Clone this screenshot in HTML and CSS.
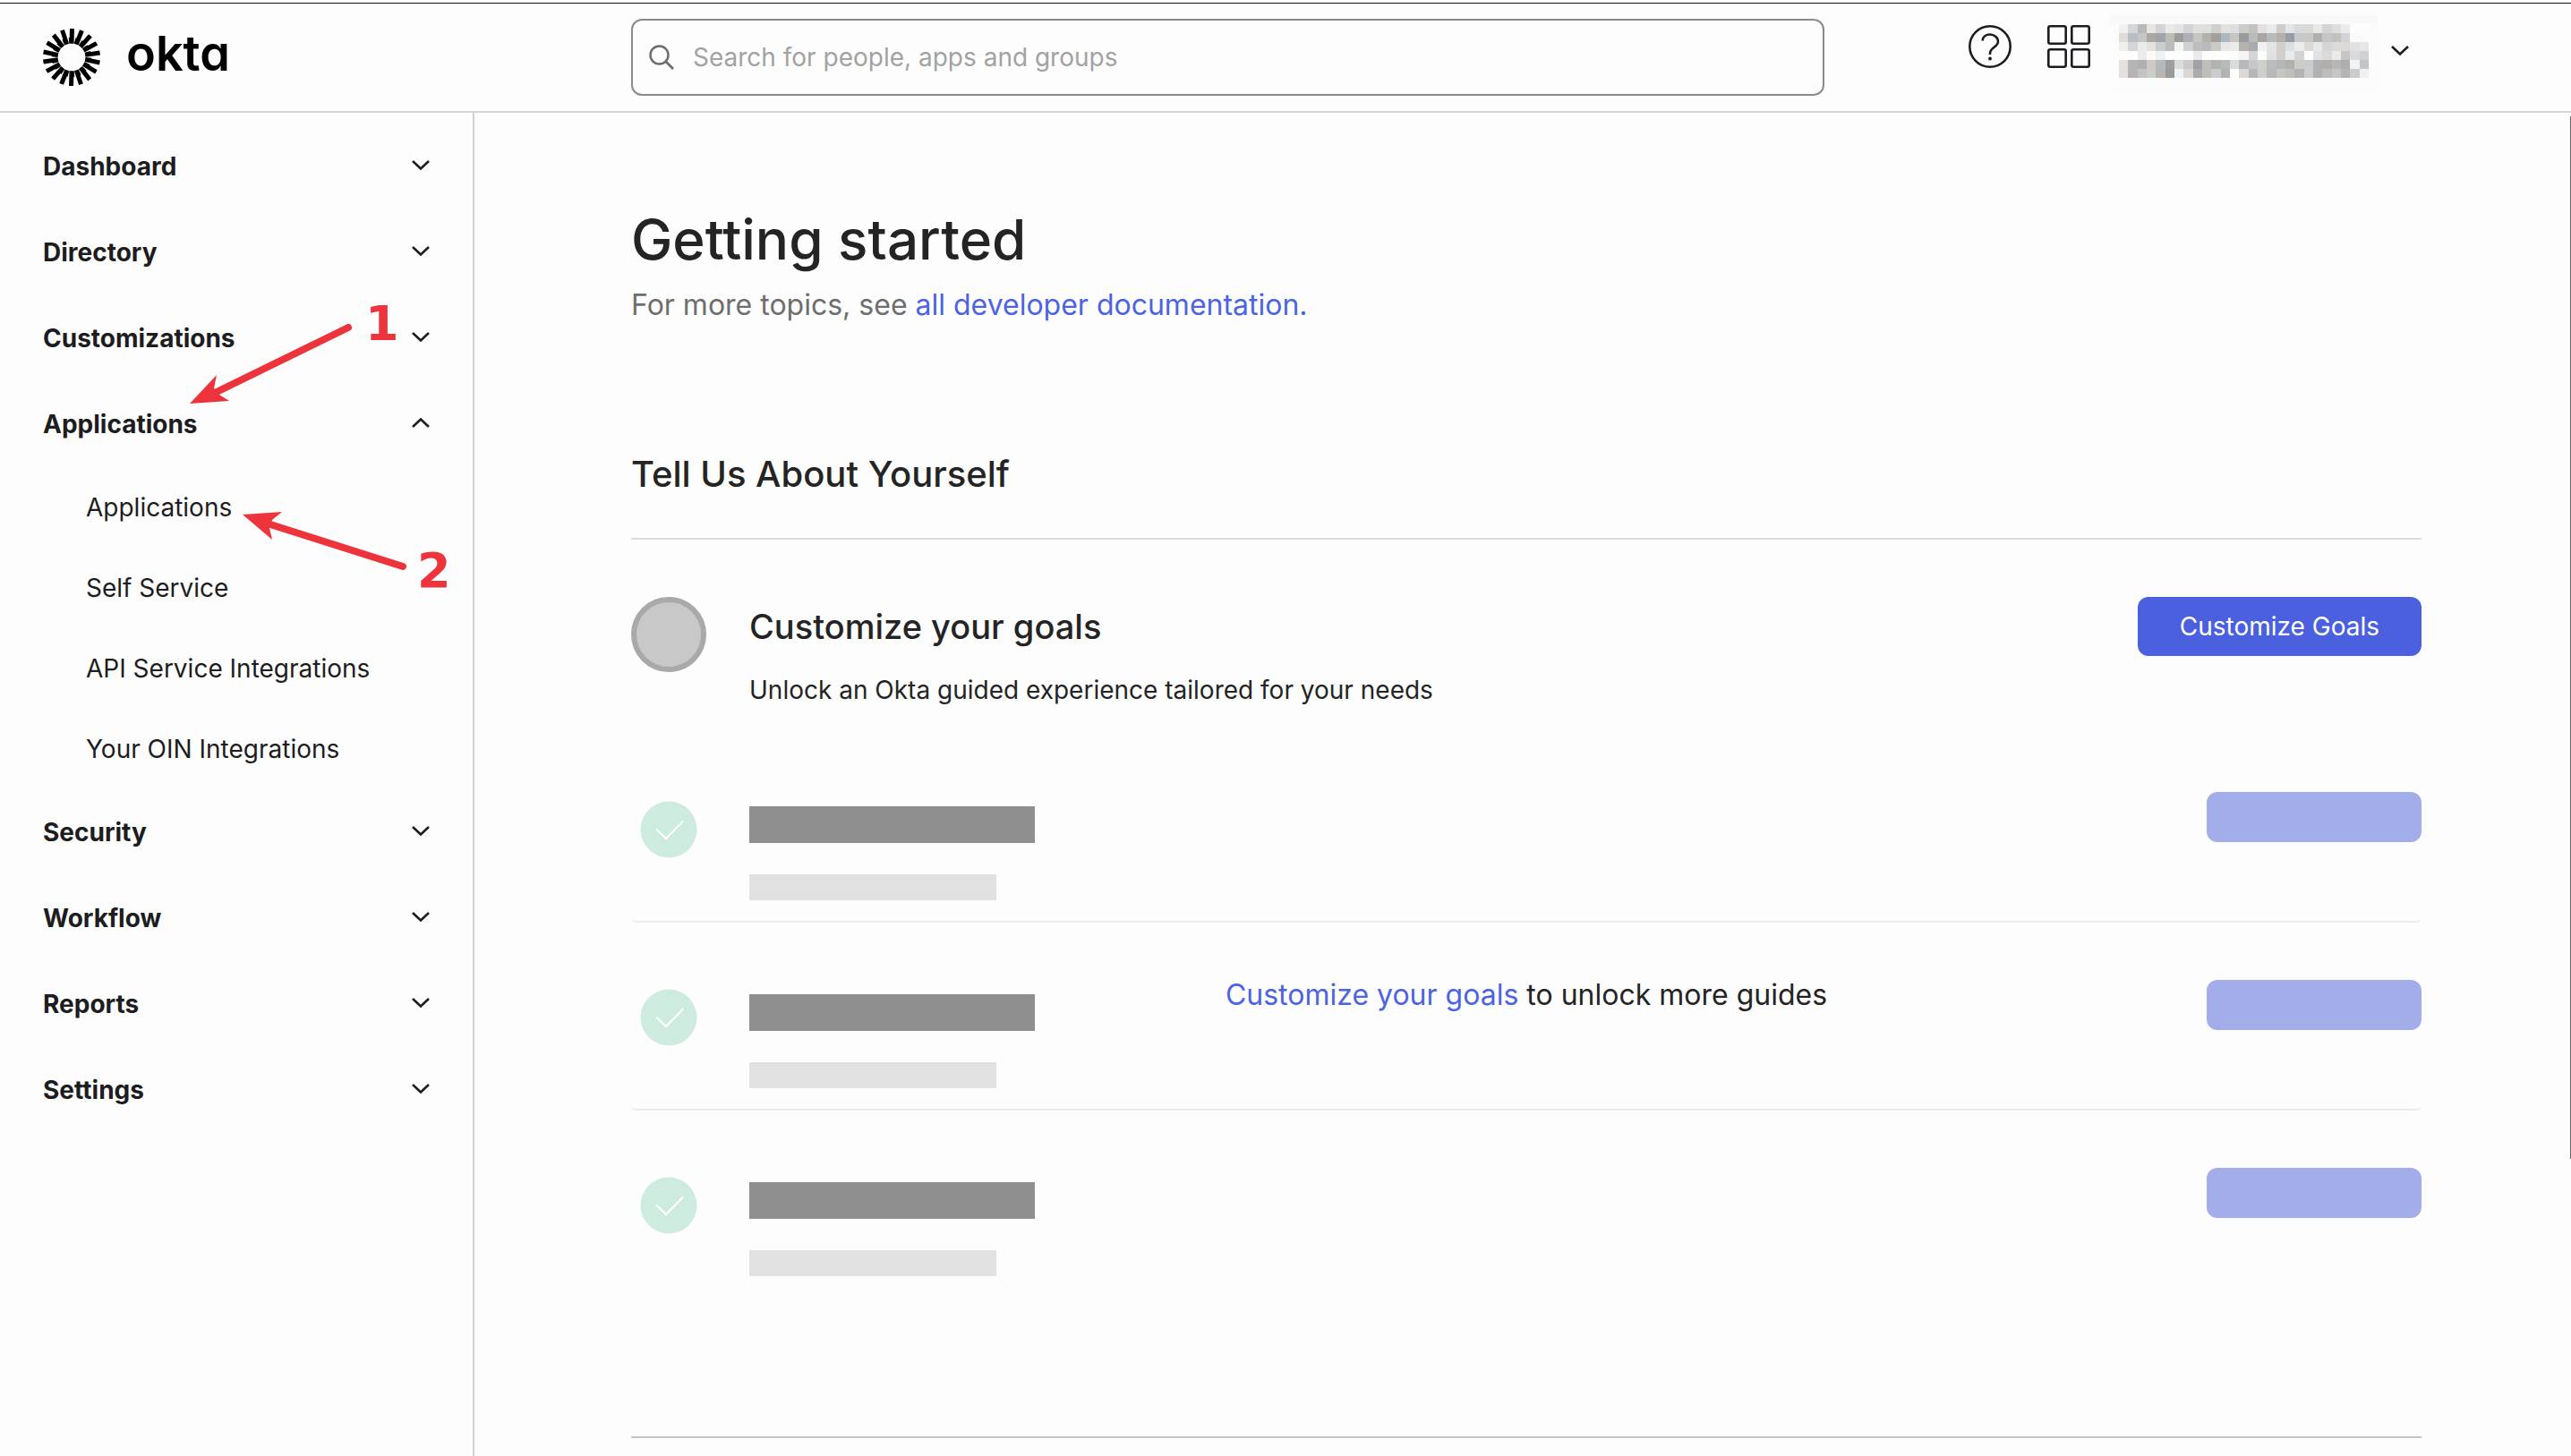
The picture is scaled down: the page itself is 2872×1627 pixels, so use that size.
FILE: index.html
```html
<!DOCTYPE html>
<html lang="en">
<head>
<meta charset="utf-8">
<meta name="viewport" content="width=device-width, initial-scale=1">
<title>Getting started | Okta</title>
<link rel="stylesheet" href="styles.css">
</head>
<body>
<svg class="sprite" aria-hidden="true">
  <symbol id="chevron" viewBox="0 0 24 24"><path d="M3 6l9 8.500 9-8.500" fill="none" stroke="currentColor" stroke-width="2.600"/></symbol>
  <symbol id="chevron-up" viewBox="0 0 24 24"><path d="M3 15l9-8.500 9 8.500" fill="none" stroke="currentColor" stroke-width="2.600"/></symbol>
  <symbol id="check" viewBox="0 0 64 64"><circle cx="32" cy="32" r="31.500" fill="#ceebdf"/><path d="M18 31.500L29 42 48 22.500" fill="none" stroke="#fff" stroke-width="2"/></symbol>
  <path id="ray" d="M-2-32H3L2.500-15.300H-2.700L-3.200-22H-2.300Z"/>
</svg>

<header class="topbar">
  <a class="brand" href="#">
    <svg class="brand-mark" viewBox="-32 -32 64 64" aria-hidden="true">
      <use href="#ray"/><use href="#ray" transform="rotate(20)"/><use href="#ray" transform="rotate(40)"/>
      <use href="#ray" transform="rotate(60)"/><use href="#ray" transform="rotate(80)"/><use href="#ray" transform="rotate(100)"/>
      <use href="#ray" transform="rotate(120)"/><use href="#ray" transform="rotate(140)"/><use href="#ray" transform="rotate(160)"/>
      <use href="#ray" transform="rotate(180)"/><use href="#ray" transform="rotate(200)"/><use href="#ray" transform="rotate(220)"/>
      <use href="#ray" transform="rotate(240)"/><use href="#ray" transform="rotate(260)"/><use href="#ray" transform="rotate(280)"/>
      <use href="#ray" transform="rotate(300)"/><use href="#ray" transform="rotate(320)"/><use href="#ray" transform="rotate(340)"/>
    </svg>
    <span class="brand-name">okta</span>
  </a>
  <label class="search">
    <svg class="search-icon" viewBox="0 0 30 30" aria-hidden="true"><circle cx="12.500" cy="12.500" r="10" fill="none" stroke="#6e6e6e" stroke-width="2.500"/><path d="M19.500 19.500L28 28" stroke="#6e6e6e" stroke-width="2.800"/></svg>
    <input class="search-input" type="text" aria-label="Search" placeholder="Search for people, apps and groups">
  </label>
  <div class="tools">
    <button class="icon-button" type="button" aria-label="Help">
      <svg viewBox="0 0 48 48" fill="none" stroke="currentColor" stroke-width="2.600"><circle cx="24" cy="24" r="22.700"/><path d="M15.500 17.500C16 13 19.500 10.500 24 10.500s9 3.200 9 8c0 6-9 6.500-9 13v1.500"/><circle cx="24" cy="37.500" r="1.900" fill="currentColor" stroke="none"/></svg>
    </button>
    <button class="icon-button" type="button" aria-label="Apps">
      <svg viewBox="0 0 48 48" fill="none" stroke="currentColor" stroke-width="2.600"><rect x="1.300" y="1.300" width="19.400" height="19.400" rx="2"/><rect x="27.300" y="1.300" width="19.400" height="19.400" rx="2"/><rect x="1.300" y="27.300" width="19.400" height="19.400" rx="2"/><rect x="27.300" y="27.300" width="19.400" height="19.400" rx="2"/></svg>
    </button>
    <button class="account" type="button" aria-label="Account">
      <span class="account-box"><svg class="account-mosaic" id="mosaic" viewBox="0 0 27 6" preserveAspectRatio="none" shape-rendering="crispEdges"></svg></span>
      <svg class="chevron account-chevron"><use href="#chevron"/></svg>
    </button>
  </div>
</header>

<div class="layout">
  <nav class="sidebar">
    <button class="nav-item" type="button">Dashboard<svg class="chevron"><use href="#chevron"/></svg></button>
    <button class="nav-item" type="button">Directory<svg class="chevron"><use href="#chevron"/></svg></button>
    <button class="nav-item" type="button">Customizations<svg class="chevron"><use href="#chevron"/></svg></button>
    <button class="nav-item" type="button" aria-expanded="true">Applications<svg class="chevron"><use href="#chevron-up"/></svg></button>
    <a class="nav-link" href="#">Applications</a>
    <a class="nav-link" href="#">Self Service</a>
    <a class="nav-link" href="#">API Service Integrations</a>
    <a class="nav-link" href="#">Your OIN Integrations</a>
    <button class="nav-item" type="button">Security<svg class="chevron"><use href="#chevron"/></svg></button>
    <button class="nav-item" type="button">Workflow<svg class="chevron"><use href="#chevron"/></svg></button>
    <button class="nav-item" type="button">Reports<svg class="chevron"><use href="#chevron"/></svg></button>
    <button class="nav-item" type="button">Settings<svg class="chevron"><use href="#chevron"/></svg></button>
  </nav>

  <main class="content">
    <h1 class="page-title">Getting started</h1>
    <p class="lead">For more topics, see <a href="#">all developer documentation.</a></p>

    <section>
      <h2 class="section-title">Tell Us About Yourself</h2>
      <div class="goal">
        <span class="goal-dot"></span>
        <div class="goal-text">
          <h3 class="goal-title">Customize your goals</h3>
          <p class="goal-note">Unlock an Okta guided experience tailored for your needs</p>
        </div>
        <button class="primary" type="button">Customize Goals</button>
      </div>
      <div class="guides">
        <div class="guide">
          <svg class="guide-check"><use href="#check"/></svg>
          <div class="guide-bars"><div class="bar-title"></div><div class="bar-note"></div></div>
          <div class="bar-button"></div>
        </div>
        <div class="guide">
          <svg class="guide-check"><use href="#check"/></svg>
          <div class="guide-bars"><div class="bar-title"></div><div class="bar-note"></div></div>
          <div class="bar-button"></div>
        </div>
        <div class="guide">
          <svg class="guide-check"><use href="#check"/></svg>
          <div class="guide-bars"><div class="bar-title"></div><div class="bar-note"></div></div>
          <div class="bar-button"></div>
        </div>
        <p class="unlock"><a href="#">Customize your goals</a> to unlock more guides</p>
      </div>
    </section>
  </main>
</div>

<div class="scroll-thumb"></div>
<svg class="arrows" viewBox="0 0 540 700" aria-hidden="true">
  <path d="M389 366L242 438M450 633L302 586" stroke-width="8" stroke-linecap="round"/>
  <path class="head" d="M212 451L242 419 239 434 245 441 256 448ZM271 575L315 572 304 581 301 590 304 603Z"/>
</svg>
<span class="step step-one">1</span>
<span class="step step-two">2</span>
<script src="mosaic.js"></script>
</body>
</html>
```
FILE: styles.css
```css
* { box-sizing: border-box; }

body {
  margin: 0;
  min-height: 100vh;
  display: flex;
  flex-direction: column;
  position: relative;
  background: #fdfdfd;
  color: #1d1d21;
  font: 400 28px/40px Inter, "Liberation Sans", sans-serif;
}

h1, h2, h3, p { margin: 0; }
a { color: #4c64e1; text-decoration: none; }
button { border: 0; padding: 0; background: none; color: inherit; font: inherit; }
.sprite { position: absolute; width: 0; height: 0; }

/* Top bar */
.topbar {
  display: flex;
  align-items: center;
  height: 126px;
  padding: 4px 167px 0 48px;
  border-bottom: 2px solid #d4d4dc;
  background: linear-gradient(#fff 3px, #111 3px, #111 4px, #fdfdfd 4px);
}
.brand { display: flex; align-items: center; width: 657px; gap: 29px; color: #000; }
.brand-mark { width: 64px; height: 64px; }
.brand-name {
  font-size: 54px;
  font-weight: 600;
  line-height: 60px;
  padding-bottom: 8px;
  font-feature-settings: "cv11";
}
.search {
  display: flex;
  align-items: center;
  gap: 20px;
  flex: 0 1 1333px;
  height: 86px;
  padding: 0 17px;
  border: 2px solid #8a8a8a;
  border-radius: 12px;
}
.search-icon { width: 30px; height: 30px; }
.search-input {
  flex: 1;
  border: 0;
  padding: 0;
  background: none;
  font: inherit;
  outline: 0;
}
.search-input::placeholder { color: #a2a2a2; opacity: 1; }
.tools {
  display: flex;
  align-items: flex-start;
  align-self: flex-start;
  gap: 40px;
  margin-left: auto;
  padding-top: 13px;
}
.icon-button { width: 48px; height: 48px; margin-top: 11px; }
.icon-button svg { display: block; }
.account { display: flex; align-items: flex-start; gap: 13px; margin: 0 12px 0 -18px; }
.account-box { height: 89px; width: 299px; padding: 10px; background: linear-gradient(#f9f9f9 10px, #fcfcfc 10px); }
.account-mosaic { display: block; width: 279px; height: 60px; }
.account-chevron { margin-top: 29px; }
.chevron { width: 24px; height: 24px; }

/* Side navigation */
.layout { display: flex; flex: 1; }
.sidebar {
  display: flex;
  flex-direction: column;
  flex: 0 0 530px;
  padding: 12px 46px 0 48px;
  border-right: 2px solid #d1d1d6;
}
.nav-item {
  display: flex;
  align-items: center;
  justify-content: space-between;
  height: 96px;
  font-weight: 700;
}
.nav-link { padding: 25px 48px; color: inherit; }

/* Main column */
.content { flex: 1; padding: 106px 167px 20px 175px; color: #242424; }
.page-title { font-size: 62px; font-weight: 500; line-height: 72px; }
.lead { margin-top: 17px; font-size: 32px; color: #6e6e6e; }
.section-title {
  margin-top: 145px;
  padding-bottom: 47px;
  border-bottom: 2px solid #dddddd;
  font-size: 40px;
  font-weight: 500;
  line-height: 48px;
}
.goal { display: flex; align-items: flex-start; height: 218px; padding-top: 64px; }
.goal-dot {
  width: 84px;
  height: 84px;
  margin-right: 48px;
  border: 6px solid #a9a9a9;
  border-radius: 50%;
  background: #c8c8c8;
}
.goal-text { flex: 1; padding-top: 9px; }
.goal-title { font-size: 38px; font-weight: 500; line-height: 48px; }
.goal-note { margin-top: 27px; }
.primary {
  height: 66px;
  padding: 0 47px;
  border-radius: 12px;
  background: #4a60df;
  color: #fff;
}
.guides { position: relative; padding-bottom: 154px; border-bottom: 2px solid #c4c4c4; }
.guide {
  display: flex;
  align-items: flex-start;
  height: 210px;
  padding-top: 64px;
  border-bottom: 2px solid #ececec;
  border-radius: 6px;
}
.guide:nth-child(3) { border-color: transparent; }
.guide-check { width: 64px; height: 64px; margin: 10px 58px 0 10px; }
.guide-bars { flex: 1; padding-top: 16px; }
.bar-title { width: 319px; height: 41px; background: #8f8f8f; }
.bar-note { width: 276px; height: 29px; margin-top: 35px; background: #e1e1e1; }
.bar-button { width: 240px; height: 56px; border-radius: 12px; background: #a3adea; }
.unlock {
  position: absolute;
  top: 271px;
  width: 100%;
  text-align: center;
  font-size: 32px;
}

/* Overlays */
.scroll-thumb { position: absolute; top: 130px; right: 0; width: 1px; height: 1165px; background: #666; }
.arrows {
  position: absolute;
  top: 0;
  left: 0;
  width: 540px;
  height: 700px;
  fill: none;
  stroke: #ed333b;
  pointer-events: none;
}
.head { fill: #ed333b; stroke: none; }
.step {
  position: absolute;
  color: #ed333b;
  font: 700 54px/64px "DejaVu Sans", sans-serif;
}
.step-one { left: 408px; top: 330px; }
.step-two { left: 466px; top: 606px; }
```
FILE: mosaic.js
```js
// Pixelated account name: one hex colour per cell, row by row.
const rows = [
  "f3f1ef d4d7da bab9b5 e6e6e6 d1d4d8 e9e9e9 e5e3e0 d2d4d7 e1dfdb dde0df d0d0cf e4e1df dce0e2 cdcac8 c2c2be dee2e5 eaeaea d0cdc9 e3e4e5 d7dadb dbdad7 e8e8e8 d2d5d8 e0ddda e9ebed fdfdfd fdfdfd",
  "e2dcd8 b8bfc3 c5c5c5 aca7a2 a2a3a8 bebbb6 9c9c9e aeb0b3 c4c6c4 b5b1ab a39f9b adb7be c6c5c2 9b9b9d b9bbb9 aba5a2 b7bbbe b5afaa 979ca5 c7c9c8 c5c8c7 b1b0ad c8c6c4 c0c2c0 d1d3d5 fafafa fafafa",
  "f1efed d3d5d8 ebebeb e4e2df cbcccd bcbcbc f5f5f3 cfd2d4 c1bdba b8babb cbcac7 e5e7e9 ebece9 b7b1ae a9aaac eff1f3 e4e4e4 d0cfcd dddee1 ececec dcd9d6 e8e8e8 d3d5d6 dddad7 dcdad8 e0e1e4 e6e6e6",
  "fdfdfd fdfdfd ebebeb fbfaf8 f0f0f0 fdfdfd fdfdfd fdfdfd ebebeb fdfdfd fdfdfd fdfdfd fdfdfd f5f3f1 d5d6d8 fcfcfc e1e1e1 d0cfcd eaebec d1d3d5 fefefe e1e2e3 dcdad8 ebebeb c6c6c6 dadada d0d1d2",
  "e6e1de b5b5b5 afafaf cccac7 b3b9bc 9f9e9c dadcdb cacaca a0a2a5 bebdba b3b2b0 b7babb d9dbda b8b8b8 c6c7c6 d0cecb b8bcbf b6b6b4 afb0af cdccc6 c9cccd afb3b6 b0afab b7b6b4 adaeb0 f2f3f5 c3c4c6",
  "e6e1de b5b5b5 c2c4c2 cbcdcb bbb5b1 9a9a9a edf4f9 dad8d5 aaabad bebebb c9cdcf b3b3b3 fdfdfd ddd8d4 b6b7b9 cfcdcb b6b8ba c8c6c3 c0bfbd b1b3b5 cecdca b1b2b4 bebdbb c8c6c4 b5b4b2 cbcccd edf1f5"
];
document.getElementById("mosaic").innerHTML = rows.map((row, y) =>
  row.split(" ").map((c, x) => `<rect x="${x}" y="${y}" width="1" height="1" fill="#${c}"/>`).join("")
).join("");
```
